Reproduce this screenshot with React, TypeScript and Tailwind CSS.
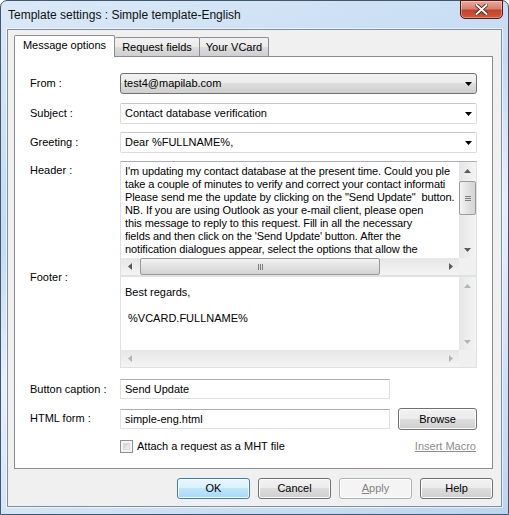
import React from "react";

type Dir = "up" | "down" | "left" | "right";

function Arrow({ dir, color }: { dir: Dir; color: string }) {
  const vertical = dir === "up" || dir === "down";
  const pts = {
    up: "0,4 7,4 3.5,0",
    down: "0,0 7,0 3.5,4",
    left: "4,0 4,7 0,3.5",
    right: "0,0 0,7 4,3.5",
  }[dir];
  return (
    <svg width={vertical ? 7 : 4} height={vertical ? 4 : 7}>
      <polygon points={pts} fill={color} />
    </svg>
  );
}

function VScroll({ thumb, arrow }: { thumb?: boolean; arrow: string }) {
  return (
    <div className="flex flex-col h-full w-[17px] bg-[linear-gradient(to_right,#e6e6e6,#f4f4f4)]">
      <div className="h-[17px] flex items-center justify-center">
        <Arrow dir="up" color={arrow} />
      </div>
      <div className="flex-1 relative">
        {thumb && (
          <div className="absolute left-0 right-0 top-[2px] h-[34px] rounded-[2px] border border-[#9a9a9a] bg-[linear-gradient(to_right,#f3f3f3,#e2e2e2_50%,#d3d3d3)] flex flex-col items-center justify-center gap-[1px]">
            <div className="w-[6px] h-px bg-[#7d7d7d]" />
            <div className="w-[6px] h-px bg-[#7d7d7d]" />
            <div className="w-[6px] h-px bg-[#7d7d7d]" />
          </div>
        )}
      </div>
      <div className="h-[17px] flex items-center justify-center">
        <Arrow dir="down" color={arrow} />
      </div>
    </div>
  );
}

function HScroll({ thumb, arrow }: { thumb?: boolean; arrow: string }) {
  return (
    <div className="flex w-full h-[17px] bg-[linear-gradient(#e6e6e6,#f4f4f4)]">
      <div className="w-[17px] flex items-center justify-center">
        <Arrow dir="left" color={arrow} />
      </div>
      <div className="flex-1 relative">
        {thumb && (
          <div className="absolute top-0 bottom-0 left-[2px] w-[240px] rounded-[2px] border border-[#9a9a9a] bg-[linear-gradient(#f3f3f3,#e2e2e2_50%,#d3d3d3)] flex items-center justify-center gap-[1px]">
            <div className="w-px h-[6px] bg-[#7d7d7d]" />
            <div className="w-px h-[6px] bg-[#7d7d7d]" />
            <div className="w-px h-[6px] bg-[#7d7d7d]" />
          </div>
        )}
      </div>
      <div className="w-[17px] flex items-center justify-center">
        <Arrow dir="right" color={arrow} />
      </div>
    </div>
  );
}

function Combo({ value, raised }: { value: string; raised?: boolean }) {
  return (
    <div
      className={
        raised
          ? "h-[21px] flex items-center rounded-[3px] border border-[#707070] bg-[linear-gradient(#f2f2f2_0%,#ebebeb_50%,#dddddd_50%,#cfcfcf_100%)] pl-[3px] pr-[4px]"
          : "h-[21px] flex items-center rounded-[2px] border border-[#d9dce2] border-t-[#c5c8cf] bg-white pl-[4px] pr-[4px]"
      }
    >
      <span className="flex-1">{value}</span>
      <Arrow dir="down" color="#000" />
    </div>
  );
}

function TextBox({ value, w }: { value: string; w: string }) {
  return (
    <div className={`${w} h-[20px] flex items-center border border-[#dde0e6] border-t-[#abadb3] bg-white pl-[4px]`}>
      {value}
    </div>
  );
}

const btn =
  "h-[21px] w-[73px] rounded-[3px] border flex items-center justify-center shadow-[inset_0_0_0_1px_#fcfcfc]";
const btnNormal =
  "border-[#707070] bg-[linear-gradient(#f2f2f2_0%,#ebebeb_50%,#dddddd_50%,#cfcfcf_100%)]";

// lines as far as the edit box shows them
const headerLines = [
  "I'm updating my contact database at the present time. Could you ple",
  "take a couple of minutes to verify and correct your contact informati",
  'Please send me the update by clicking on the "Send Update"  button.',
  "NB. If you are using Outlook as your e-mail client, please open",
  "this message to reply to this request. Fill in all the necessary",
  "fields and then click on the 'Send Update' button. After the",
  "notification dialogues appear, select the options that allow the",
];

export default function App() {
  return (
    <div className="w-[509px] h-[515px] bg-white font-['Liberation_Sans',Arial,sans-serif] text-[11px] text-black">
      <div className="w-full h-full flex flex-col rounded-t-[7px] border border-[#3f5771] bg-[linear-gradient(160deg,#dbe9f7_0%,#c4dbf2_35%,#e6f0fa_55%,#bcd5ee_100%)]">
        {/* title bar */}
        <div className="relative h-[28px] flex items-center pl-[7px] pb-[1px]">
          <span className="text-[12px] text-[#111]">Template settings : Simple template-English</span>
          <div className="absolute right-[5px] -top-px w-[43px] h-[19px] rounded-b-[5px] border border-[#4e1a12] bg-[linear-gradient(#e9a99d_0%,#d8806f_45%,#c2432c_55%,#d2563c_100%)] shadow-[inset_0_0_0_1px_rgba(255,255,255,0.35)] flex items-center justify-center">
            <svg width="13" height="11" viewBox="0 0 13 11">
              <path d="M1.5 1 L11.5 10 M11.5 1 L1.5 10" stroke="#3a1a14" strokeWidth="3.6" strokeLinecap="square" />
              <path d="M1.5 1 L11.5 10 M11.5 1 L1.5 10" stroke="#ffffff" strokeWidth="2" strokeLinecap="square" />
            </svg>
          </div>
        </div>

        {/* client area */}
        <div className="flex-1 mx-[6px] mb-[7px] border border-[#7d8fa3] shadow-[0_0_0_1px_rgba(255,255,255,0.6)] bg-[#f0f0f0] flex flex-col pl-[6px] pt-[5px]">
          {/* tabs */}
          <div className="h-[21px] flex items-end relative z-10">
            <div className="h-[22px] w-[101px] -mb-px border border-b-0 border-[#898c95] rounded-t-[2px] bg-white flex items-center justify-center pb-[2px] relative z-10">
              Message options
            </div>
            <div className="h-[19px] w-[85px] border border-b-0 border-l-0 border-[#898c95] rounded-t-[2px] bg-[linear-gradient(#f2f2f2_0%,#ebebeb_50%,#dddddd_50%,#cfcfcf_100%)] flex items-center justify-center">
              Request fields
            </div>
            <div className="h-[19px] w-[70px] border border-b-0 border-[#898c95] rounded-t-[2px] bg-[linear-gradient(#f2f2f2_0%,#ebebeb_50%,#dddddd_50%,#cfcfcf_100%)] flex items-center justify-center -ml-px">
              Your VCard
            </div>
          </div>

          {/* panel */}
          <div className="w-[479px] h-[413px] border border-[#898c95] bg-white pl-[15px] pr-[15px] pt-[16px] grid grid-cols-[90px_357px] content-start">
            <div className="h-[21px] flex items-center">From :</div>
            <Combo value="test4@mapilab.com" raised />

            <div className="h-[21px] mt-[9px] flex items-center">Subject :</div>
            <div className="mt-[9px]">
              <Combo value="Contact database verification" />
            </div>

            <div className="h-[21px] mt-[8px] flex items-center">Greeting :</div>
            <div className="mt-[8px]">
              <Combo value="Dear %FULLNAME%," />
            </div>

            <div className="mt-[8px] pt-[1px]">Header :</div>
            <div className="mt-[8px] h-[115px] border border-[#dde0e6] border-t-[#abadb3] grid grid-cols-[1fr_17px] grid-rows-[1fr_17px]">
              <div className="whitespace-pre leading-[13px] tracking-[-0.1px] pl-[4px] pt-[3px]">
                {headerLines.map((l) => (
                  <div key={l}>{l}</div>
                ))}
              </div>
              <VScroll thumb arrow="#5b5b5b" />
              <HScroll thumb arrow="#5b5b5b" />
              <div className="bg-[#f0f0f0]" />
            </div>

            <div className="-mt-[7px]">Footer :</div>
            <div className="h-[92px] border border-[#dde0e6] grid grid-cols-[1fr_17px] grid-rows-[1fr_17px]">
              <div className="whitespace-pre leading-[13px] pl-[4px] pt-[9px]">
                <div>Best regards,</div>
                <div>&nbsp;</div>
                <div> %VCARD.FULLNAME%</div>
              </div>
              <VScroll arrow="#b4b4b4" />
              <HScroll arrow="#b4b4b4" />
              <div className="bg-[#f0f0f0]" />
            </div>

            <div className="h-[20px] mt-[11px] flex items-center">Button caption :</div>
            <div className="mt-[11px]">
              <TextBox value="Send Update" w="w-[270px]" />
            </div>

            <div className="h-[20px] mt-[9px] flex items-center">HTML form :</div>
            <div className="mt-[9px] flex items-center gap-[8px]">
              <TextBox value="simple-eng.html" w="w-[270px]" />
              <div className={`${btn} ${btnNormal} w-[79px] h-[22px]`}>Browse</div>
            </div>

            <div />
            <div className="mt-[10px] h-[13px] flex items-center">
              <div className="w-[13px] h-[13px] border border-[#8e8f8f] bg-[#f4f4f4] p-[2px]">
                <div className="w-full h-full bg-[linear-gradient(135deg,#cbcfd5,#f6f6f6)] border border-[#dadada]" />
              </div>
              <span className="ml-[4px] flex-1">Attach a request as a MHT file</span>
              <span className="underline text-[#8d8d8d] mr-[1px]">Insert Macro</span>
            </div>
          </div>

          {/* bottom buttons */}
          <div className="w-[479px] mt-[9px] flex justify-end gap-[8px]">
            <div className={`${btn} border-[#3c7fb1] bg-[linear-gradient(#eaf6fd_0%,#d9f0fc_50%,#bee6fd_50%,#a7d9f5_100%)] shadow-[inset_0_0_0_1px_#dff2fc]`}>
              OK
            </div>
            <div className={`${btn} ${btnNormal}`}>Cancel</div>
            <div className={`${btn} border-[#adb2b5] bg-[#f4f4f4] text-[#838383]`}>
              <span>
                <span className="underline">A</span>pply
              </span>
            </div>
            <div className={`${btn} ${btnNormal}`}>Help</div>
          </div>
        </div>
      </div>
    </div>
  );
}
